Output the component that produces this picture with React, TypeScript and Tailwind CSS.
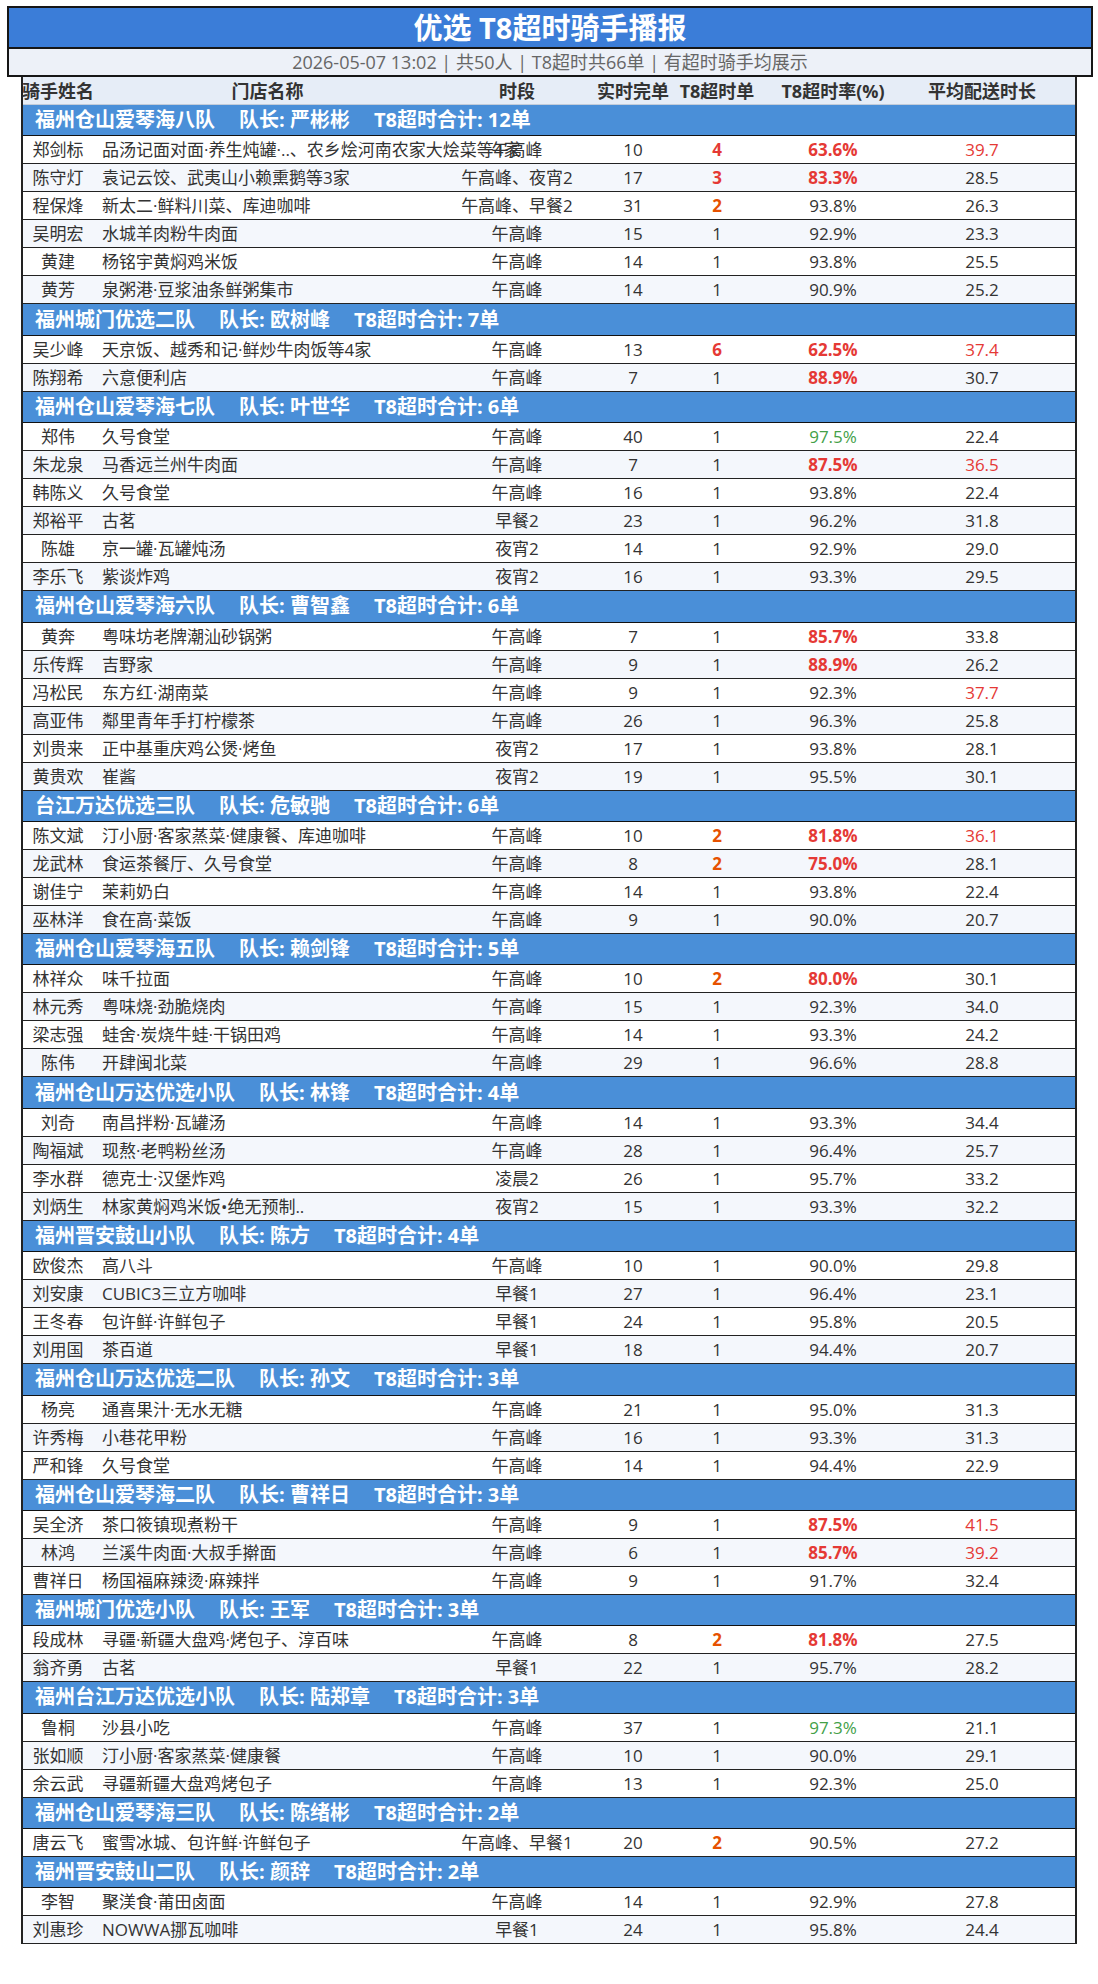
import React from "react";

type Row = [string, string, string, number, number, string, string];
type Group = { team: string; leader: string; total: number; rows: Row[] };

const groups: Group[] = [
  {
    team: "福州仓山爱琴海八队",
    leader: "严彬彬",
    total: 12,
    rows: [
      ["郑剑标", "品汤记面对面·养生炖罐·..、农乡烩河南农家大烩菜等4家", "午高峰", 10, 4, "63.6%", "39.7"],
      ["陈守灯", "袁记云饺、武夷山小赖熏鹅等3家", "午高峰、夜宵2", 17, 3, "83.3%", "28.5"],
      ["程保烽", "新太二·鲜料川菜、库迪咖啡", "午高峰、早餐2", 31, 2, "93.8%", "26.3"],
      ["吴明宏", "水城羊肉粉牛肉面", "午高峰", 15, 1, "92.9%", "23.3"],
      ["黄建", "杨铭宇黄焖鸡米饭", "午高峰", 14, 1, "93.8%", "25.5"],
      ["黄芳", "泉粥港·豆浆油条鲜粥集市", "午高峰", 14, 1, "90.9%", "25.2"],
    ],
  },
  {
    team: "福州城门优选二队",
    leader: "欧树峰",
    total: 7,
    rows: [
      ["吴少峰", "天京饭、越秀和记·鲜炒牛肉饭等4家", "午高峰", 13, 6, "62.5%", "37.4"],
      ["陈翔希", "六意便利店", "午高峰", 7, 1, "88.9%", "30.7"],
    ],
  },
  {
    team: "福州仓山爱琴海七队",
    leader: "叶世华",
    total: 6,
    rows: [
      ["郑伟", "久号食堂", "午高峰", 40, 1, "97.5%", "22.4"],
      ["朱龙泉", "马香远兰州牛肉面", "午高峰", 7, 1, "87.5%", "36.5"],
      ["韩陈义", "久号食堂", "午高峰", 16, 1, "93.8%", "22.4"],
      ["郑裕平", "古茗", "早餐2", 23, 1, "96.2%", "31.8"],
      ["陈雄", "京一罐·瓦罐炖汤", "夜宵2", 14, 1, "92.9%", "29.0"],
      ["李乐飞", "紫谈炸鸡", "夜宵2", 16, 1, "93.3%", "29.5"],
    ],
  },
  {
    team: "福州仓山爱琴海六队",
    leader: "曹智鑫",
    total: 6,
    rows: [
      ["黄奔", "粤味坊老牌潮汕砂锅粥", "午高峰", 7, 1, "85.7%", "33.8"],
      ["乐传辉", "吉野家", "午高峰", 9, 1, "88.9%", "26.2"],
      ["冯松民", "东方红·湖南菜", "午高峰", 9, 1, "92.3%", "37.7"],
      ["高亚伟", "鄰里青年手打柠檬茶", "午高峰", 26, 1, "96.3%", "25.8"],
      ["刘贵来", "正中基重庆鸡公煲·烤鱼", "夜宵2", 17, 1, "93.8%", "28.1"],
      ["黄贵欢", "崔酱", "夜宵2", 19, 1, "95.5%", "30.1"],
    ],
  },
  {
    team: "台江万达优选三队",
    leader: "危敏驰",
    total: 6,
    rows: [
      ["陈文斌", "汀小厨·客家蒸菜·健康餐、库迪咖啡", "午高峰", 10, 2, "81.8%", "36.1"],
      ["龙武林", "食运茶餐厅、久号食堂", "午高峰", 8, 2, "75.0%", "28.1"],
      ["谢佳宁", "茉莉奶白", "午高峰", 14, 1, "93.8%", "22.4"],
      ["巫林洋", "食在高·菜饭", "午高峰", 9, 1, "90.0%", "20.7"],
    ],
  },
  {
    team: "福州仓山爱琴海五队",
    leader: "赖剑锋",
    total: 5,
    rows: [
      ["林祥众", "味千拉面", "午高峰", 10, 2, "80.0%", "30.1"],
      ["林元秀", "粤味烧·劲脆烧肉", "午高峰", 15, 1, "92.3%", "34.0"],
      ["梁志强", "蛙舍·炭烧牛蛙·干锅田鸡", "午高峰", 14, 1, "93.3%", "24.2"],
      ["陈伟", "开肆闽北菜", "午高峰", 29, 1, "96.6%", "28.8"],
    ],
  },
  {
    team: "福州仓山万达优选小队",
    leader: "林锋",
    total: 4,
    rows: [
      ["刘奇", "南昌拌粉·瓦罐汤", "午高峰", 14, 1, "93.3%", "34.4"],
      ["陶福斌", "现熬·老鸭粉丝汤", "午高峰", 28, 1, "96.4%", "25.7"],
      ["李水群", "德克士·汉堡炸鸡", "凌晨2", 26, 1, "95.7%", "33.2"],
      ["刘炳生", "林家黄焖鸡米饭•绝无预制..", "夜宵2", 15, 1, "93.3%", "32.2"],
    ],
  },
  {
    team: "福州晋安鼓山小队",
    leader: "陈方",
    total: 4,
    rows: [
      ["欧俊杰", "高八斗", "午高峰", 10, 1, "90.0%", "29.8"],
      ["刘安康", "CUBIC3三立方咖啡", "早餐1", 27, 1, "96.4%", "23.1"],
      ["王冬春", "包许鲜·许鲜包子", "早餐1", 24, 1, "95.8%", "20.5"],
      ["刘用国", "茶百道", "早餐1", 18, 1, "94.4%", "20.7"],
    ],
  },
  {
    team: "福州仓山万达优选二队",
    leader: "孙文",
    total: 3,
    rows: [
      ["杨亮", "通喜果汁·无水无糖", "午高峰", 21, 1, "95.0%", "31.3"],
      ["许秀梅", "小巷花甲粉", "午高峰", 16, 1, "93.3%", "31.3"],
      ["严和锋", "久号食堂", "午高峰", 14, 1, "94.4%", "22.9"],
    ],
  },
  {
    team: "福州仓山爱琴海二队",
    leader: "曹祥日",
    total: 3,
    rows: [
      ["吴全济", "茶口筱镇现煮粉干", "午高峰", 9, 1, "87.5%", "41.5"],
      ["林鸿", "兰溪牛肉面·大叔手擀面", "午高峰", 6, 1, "85.7%", "39.2"],
      ["曹祥日", "杨国福麻辣烫·麻辣拌", "午高峰", 9, 1, "91.7%", "32.4"],
    ],
  },
  {
    team: "福州城门优选小队",
    leader: "王军",
    total: 3,
    rows: [
      ["段成林", "寻疆·新疆大盘鸡·烤包子、淳百味", "午高峰", 8, 2, "81.8%", "27.5"],
      ["翁齐勇", "古茗", "早餐1", 22, 1, "95.7%", "28.2"],
    ],
  },
  {
    team: "福州台江万达优选小队",
    leader: "陆郑章",
    total: 3,
    rows: [
      ["鲁桐", "沙县小吃", "午高峰", 37, 1, "97.3%", "21.1"],
      ["张如顺", "汀小厨·客家蒸菜·健康餐", "午高峰", 10, 1, "90.0%", "29.1"],
      ["余云武", "寻疆新疆大盘鸡烤包子", "午高峰", 13, 1, "92.3%", "25.0"],
    ],
  },
  {
    team: "福州仓山爱琴海三队",
    leader: "陈绪彬",
    total: 2,
    rows: [["唐云飞", "蜜雪冰城、包许鲜·许鲜包子", "午高峰、早餐1", 20, 2, "90.5%", "27.2"]],
  },
  {
    team: "福州晋安鼓山二队",
    leader: "颜辞",
    total: 2,
    rows: [
      ["李智", "聚渼食·莆田卤面", "午高峰", 14, 1, "92.9%", "27.8"],
      ["刘惠珍", "NOWWA挪瓦咖啡", "早餐1", 24, 1, "95.8%", "24.4"],
    ],
  },
];

const FONT = { fontFamily: '"Open Sans", "Noto Sans CJK SC", sans-serif' };

function T8Cell({ v }: { v: number }) {
  if (v >= 3) return <span className="font-bold text-[#e53935]">{v}</span>;
  if (v === 2) return <span className="font-bold text-[#e65100]">{v}</span>;
  return <span>{v}</span>;
}

function RateCell({ v }: { v: string }) {
  const n = parseFloat(v);
  if (n < 90) return <span className="font-bold text-[#e53935]">{v}</span>;
  if (n >= 97) return <span className="text-[#43a047]">{v}</span>;
  return <span>{v}</span>;
}

function AvgCell({ v }: { v: string }) {
  const n = parseFloat(v);
  if (n > 35) return <span className="text-[#e53935]">{v}</span>;
  return <span>{v}</span>;
}

function DataRow({ r, alt }: { r: Row; alt: boolean }) {
  return (
    <div
      className={`flex h-[28px] items-center border-b border-[#222] text-[17px] leading-none text-[#333] ${
        alt ? "bg-[#f4f7fc]" : "bg-white"
      }`}
    >
      <div className="flex w-[70px] shrink-0 justify-center whitespace-nowrap">{r[0]}</div>
      <div className="relative w-[349px] shrink-0 whitespace-nowrap pl-[9px]">{r[1]}</div>
      <div className="relative flex w-[150px] shrink-0 justify-center whitespace-nowrap">{r[2]}</div>
      <div className="flex w-[82px] shrink-0 justify-center">{r[3]}</div>
      <div className="flex w-[86px] shrink-0 justify-center">
        <T8Cell v={r[4]} />
      </div>
      <div className="flex w-[146px] shrink-0 justify-center">
        <RateCell v={r[5]} />
      </div>
      <div className="flex w-[169px] shrink-0 justify-center pr-[17px]">
        <AvgCell v={r[6]} />
      </div>
    </div>
  );
}

export default function App() {
  return (
    <div className="min-h-[1984px] w-[1098px] bg-white pt-[6px]" style={FONT}>
      <div className="ml-[7px] w-[1086px] border-2 border-[#161616]">
        <div className="flex h-[39px] items-center justify-center bg-[#3b7dd8] text-[29px] font-bold leading-none text-white">
          优选 T8超时骑手播报
        </div>
        <div className="flex h-[28px] items-center justify-center border-t-2 border-[#161616] bg-[#edf1f8] text-[18px] leading-none text-[#666]">
          2026-05-07 13:02 | 共50人 | T8超时共66单 | 有超时骑手均展示
        </div>
      </div>
      <div className="ml-[21px] w-[1056px] border-x-2 border-[#222]">
        <div className="flex h-[28px] items-center border-b border-[#c3ccd9] bg-[#e6edf7] text-[18px] font-bold leading-none text-[#333]">
          <div className="flex w-[70px] shrink-0 justify-center whitespace-nowrap">骑手姓名</div>
          <div className="flex w-[349px] shrink-0 justify-center whitespace-nowrap">门店名称</div>
          <div className="flex w-[150px] shrink-0 justify-center whitespace-nowrap">时段</div>
          <div className="flex w-[82px] shrink-0 justify-center whitespace-nowrap">实时完单</div>
          <div className="flex w-[86px] shrink-0 justify-center whitespace-nowrap">T8超时单</div>
          <div className="flex w-[146px] shrink-0 justify-center whitespace-nowrap">T8超时率(%)</div>
          <div className="flex w-[169px] shrink-0 justify-center whitespace-nowrap pr-[17px]">平均配送时长</div>
        </div>
        {groups.map((g) => (
          <React.Fragment key={g.team}>
            <div className="flex h-[31.4px] items-center gap-[24px] border-b border-[#111] bg-[#4a8fd8] pl-[12px] text-[20px] font-bold leading-none text-white">
              <span>{g.team}</span>
              <span>队长: {g.leader}</span>
              <span>T8超时合计: {g.total}单</span>
            </div>
            {g.rows.map((r, i) => (
              <DataRow key={r[0] + i} r={r} alt={i % 2 === 1} />
            ))}
          </React.Fragment>
        ))}
      </div>
    </div>
  );
}
